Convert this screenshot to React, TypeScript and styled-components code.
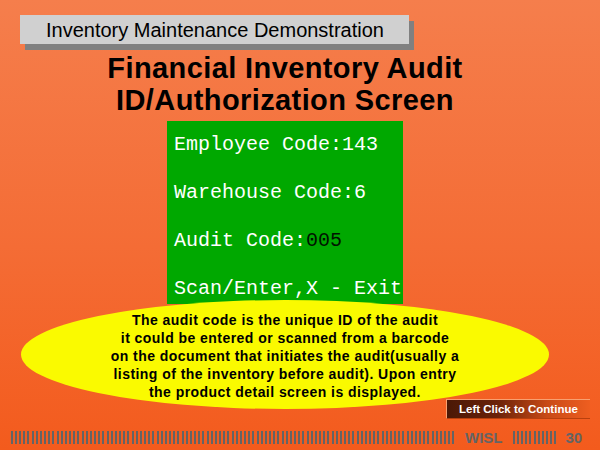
import styled, { createGlobalStyle } from "styled-components";

const GlobalStyle = createGlobalStyle`
  html, body {
    margin: 0;
    padding: 0;
  }
  body {
    font-family: "Liberation Sans", Arial, sans-serif;
  }
`;

const Slide = styled.div`
  width: 600px;
  height: 450px;
  overflow: hidden;
  display: flex;
  flex-direction: column;
  background: linear-gradient(180deg, #f57e4c 0%, #f46c35 55%, #f35b1d 100%);
`;

const TitleRow = styled.div`
  padding: 15px 0 0 20px;
`;

const TitleBox = styled.div`
  width: 389px;
  height: 29px;
  box-sizing: border-box;
  padding: 1px 0 0 26px;
  background: #d0d0d0;
  box-shadow: 5px 6px 0 #808080;
  font-size: 20px;
  line-height: 28px;
  color: #000;
  white-space: nowrap;
`;

const Stage = styled.div`
  width: 570px;
  display: flex;
  flex-direction: column;
  align-items: center;
`;

const Heading = styled.h1`
  margin: 8px 0 0;
  font-size: 29px;
  font-weight: bold;
  line-height: 32px;
  letter-spacing: 0.4px;
  text-align: center;
  color: #000;
  white-space: nowrap;
`;

const Terminal = styled.div`
  margin-top: 5px;
  width: 236px;
  height: 183px;
  box-sizing: border-box;
  padding: 0 0 0 7px;
  background: #00a800;
  font-family: "Liberation Mono", "Courier New", monospace;
  font-size: 20px;
  line-height: 48px;
  color: #fff;
  white-space: nowrap;
`;

const TermLine = styled.div``;

const TermValue = styled.span<{ $dark?: boolean }>`
  color: ${({ $dark }) => ($dark ? "#001400" : "#fff")};
`;

const Callout = styled.div`
  position: relative;
  margin-top: -4px;
  width: 528px;
  height: 109px;
  border-radius: 50%;
  background: #fafa00;
  display: flex;
  align-items: center;
  justify-content: center;
  text-align: center;
  font-size: 14px;
  font-weight: bold;
  line-height: 18px;
  letter-spacing: 0.45px;
  color: #000;
  white-space: nowrap;
`;

const CalloutText = styled.div`
  padding-top: 2px;
`;

const ButtonRow = styled.div`
  margin-top: -10px;
  display: flex;
  justify-content: flex-end;
  padding-right: 10px;
`;

const ContinueButton = styled.button`
  width: 144px;
  height: 20px;
  box-sizing: border-box;
  margin: 0;
  padding: 0 0 0 12px;
  border: none;
  border-top: 1px solid #f9a070;
  border-left: 1px solid #f9a070;
  border-bottom: 1px solid #b8400e;
  background: linear-gradient(90deg, #4a1806 0%, #6a2209 35%, #c84a16 70%, #ee5e20 100%);
  color: #fff;
  font-family: "Liberation Sans", Arial, sans-serif;
  font-size: 11.5px;
  font-weight: bold;
  line-height: 18px;
  text-align: left;
  white-space: nowrap;
  cursor: pointer;
`;

const Footer = styled.div`
  margin-top: 12px;
  padding-left: 11px;
  display: flex;
  align-items: center;
  height: 13px;
`;

const Bars = styled.span<{ $width: number }>`
  display: block;
  width: ${({ $width }) => $width}px;
  height: 13px;
  background: repeating-linear-gradient(
    90deg,
    #646464 0 2px,
    transparent 2px 4px,
    #646464 4px 6px,
    transparent 6px 8px,
    #646464 8px 10px,
    transparent 10px 12px,
    #646464 12px 14px,
    transparent 14px 16px,
    #646464 16px 18px,
    transparent 18px 21px,
    #646464 21px 23px,
    transparent 23px 25px
  );
`;

const FooterLabel = styled.span<{ $gap: number }>`
  margin: 0 ${({ $gap }) => $gap}px 0 9px;
  font-size: 15px;
  font-weight: bold;
  line-height: 13px;
  color: #646464;
`;

export default function App() {
  return (
    <>
      <GlobalStyle />
      <Slide>
        <TitleRow>
          <TitleBox>Inventory Maintenance Demonstration</TitleBox>
        </TitleRow>
        <Stage>
          <Heading>
            Financial Inventory Audit
            <br />
            ID/Authorization Screen
          </Heading>
          <Terminal>
            <TermLine>Employee Code:143</TermLine>
            <TermLine>Warehouse Code:6</TermLine>
            <TermLine>
              Audit Code:<TermValue $dark>005</TermValue>
            </TermLine>
            <TermLine>Scan/Enter,X - Exit</TermLine>
          </Terminal>
          <Callout>
            <CalloutText>
              The audit code is the unique ID of the audit
              <br />
              it could be entered or scanned from a barcode
              <br />
              on the document that initiates the audit(usually a
              <br />
              listing of the inventory before audit). Upon entry
              <br />
              the product detail screen is displayed.
            </CalloutText>
          </Callout>
        </Stage>
        <ButtonRow>
          <ContinueButton type="button">Left Click to Continue</ContinueButton>
        </ButtonRow>
        <Footer>
          <Bars $width={445} />
          <FooterLabel $gap={10}>WISL</FooterLabel>
          <Bars $width={44} />
          <FooterLabel $gap={0}>30</FooterLabel>
        </Footer>
      </Slide>
    </>
  );
}
